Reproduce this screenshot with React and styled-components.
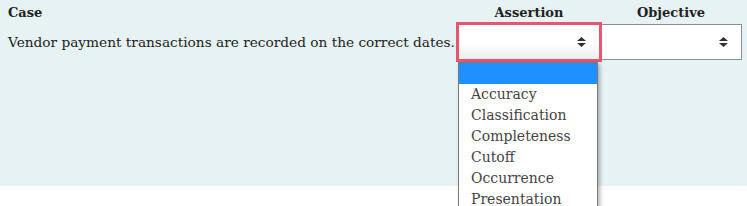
import styled, { createGlobalStyle } from "styled-components";

const Global = createGlobalStyle`
  body {
    margin: 0;
    background: #fff;
    font-family: "DejaVu Serif", "Liberation Serif", serif;
    color: #222;
  }
`;

const Page = styled.div`
  height: 206px;
  overflow: hidden;
  background: #fff;
`;

const Panel = styled.div`
  background: #e7f2f4;
  height: 186px;
  padding: 0 5px 0 8px;
`;

const Table = styled.div`
  display: grid;
  grid-template-columns: 1fr 142px 142px;
`;

const HeadCell = styled.div`
  height: 24px;
  display: flex;
  align-items: center;
  justify-content: ${(p) => (p.center ? "center" : "flex-start")};
  font-weight: bold;
  font-size: 13px;
  color: #222;
`;

const CaseText = styled.div`
  height: 36px;
  display: flex;
  align-items: center;
  font-size: 13.7px;
  white-space: nowrap;
`;

const SelectBox = styled.div`
  position: relative;
  height: 36px;
  box-sizing: border-box;
  border: 1px solid ${(p) => (p.focused ? "#e9546e" : "#8a8f94")};
  outline: ${(p) => (p.focused ? "3px solid #e9546e" : "none")};
  outline-offset: ${(p) => (p.focused ? "-1px" : "0")};
  background: ${(p) =>
    p.focused ? "linear-gradient(#fff 55%, #ececec)" : "#fff"};
  display: flex;
  align-items: center;
  justify-content: flex-end;
  padding-right: 13px;
  z-index: ${(p) => (p.focused ? 2 : 1)};
`;

const Menu = styled.ul`
  position: absolute;
  top: 37px;
  left: -1px;
  width: 140px;
  box-sizing: border-box;
  margin: 0;
  padding: 0 0 6px;
  list-style: none;
  background: #fff;
  border: 1px solid #7b7b7b;
  box-shadow: 2px 2px 4px rgba(0, 0, 0, 0.3);
`;

const Option = styled.li`
  height: 21px;
  line-height: 21px;
  padding-left: 12px;
  font-size: 14px;
  color: #444;
  white-space: nowrap;
  background: ${(p) => (p.active ? "#1e90ff" : "transparent")};
`;

function Arrows() {
  return (
    <svg width="9" height="10" viewBox="0 0 9 10">
      <path d="M4.5 0 L9 4 H0 Z M0 6 H9 L4.5 10 Z" fill="#333" />
    </svg>
  );
}

const options = [
  "",
  "Accuracy",
  "Classification",
  "Completeness",
  "Cutoff",
  "Occurrence",
  "Presentation",
];

export default function App() {
  return (
    <>
      <Global />
      <Page>
        <Panel>
          <Table>
            <HeadCell>Case</HeadCell>
            <HeadCell center>Assertion</HeadCell>
            <HeadCell center>Objective</HeadCell>
            <CaseText>
              Vendor payment transactions are recorded on the correct dates.
            </CaseText>
            <SelectBox focused>
              <Arrows />
              <Menu>
                {options.map((o, i) => (
                  <Option key={i} active={i === 0}>
                    {o}
                  </Option>
                ))}
              </Menu>
            </SelectBox>
            <SelectBox>
              <Arrows />
            </SelectBox>
          </Table>
        </Panel>
      </Page>
    </>
  );
}
